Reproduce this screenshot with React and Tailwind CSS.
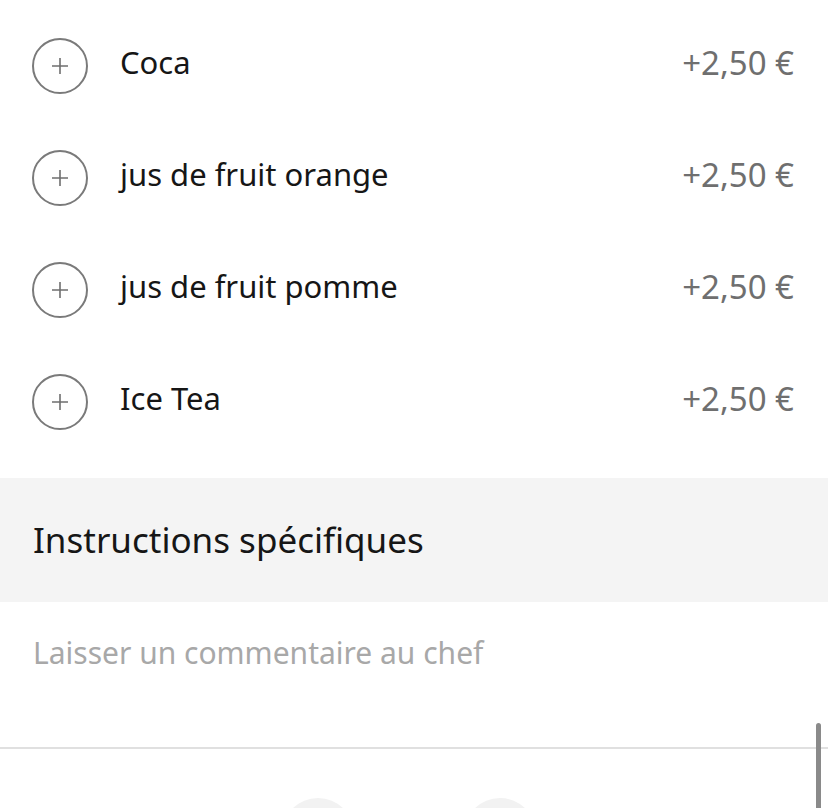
import React from "react";

const drinks = [
  { name: "Coca", price: "+2,50 €" },
  { name: "jus de fruit orange", price: "+2,50 €" },
  { name: "jus de fruit pomme", price: "+2,50 €" },
  { name: "Ice Tea", price: "+2,50 €" },
];

function PlusCircle() {
  return (
    <div className="w-[56px] h-[56px] rounded-full border-2 border-[#7a7a7a] flex items-center justify-center shrink-0">
      <svg width="20" height="20" viewBox="0 0 20 20" fill="none">
        <path d="M10 2v16M2 10h16" stroke="#6f6f6f" strokeWidth="1.6" />
      </svg>
    </div>
  );
}

export default function App() {
  return (
    <div
      className="w-[828px] h-[808px] bg-white overflow-hidden relative"
      style={{ fontFamily: '"Noto Sans", "Open Sans", sans-serif' }}
    >
      {/* Drinks list */}
      <div className="pt-[10px]">
        {drinks.map((d) => (
          <div key={d.name} className="h-[112px] flex items-center pl-[32px] pr-[34px]">
            <PlusCircle />
            <span className="ml-[32px] text-[31px] text-[#161616] pb-[8px] leading-none">{d.name}</span>
            <span className="ml-auto text-[33px] text-[#6f6f6f] pb-[8px] leading-none">{d.price}</span>
          </div>
        ))}
      </div>

      {/* Instructions */}
      <div className="mt-[20px] h-[124px] bg-[#f4f4f4] flex items-center px-[33px]">
        <span className="text-[35px] text-[#161616] leading-none pb-[2px]">Instructions spécifiques</span>
      </div>
      <div className="h-[145px] px-[33px] pt-[36px]">
        <span className="text-[30px] text-[#a8a8a8] leading-none">Laisser un commentaire au chef</span>
      </div>
      <div className="h-[2px] bg-[#e0e0e0]" />

      {/* Footer with buttons */}
      <div className="flex justify-center gap-[110px] pt-[49px] pr-[10px]">
        <div className="w-[72px] h-[72px] rounded-full bg-[#f2f2f2]" />
        <div className="w-[72px] h-[72px] rounded-full bg-[#f2f2f2]" />
      </div>

      {/* Scrollbar */}
      <div className="absolute right-[7px] top-[723px] w-[5px] h-[100px] rounded-full bg-[#8a8a8a]" />
    </div>
  );
}
